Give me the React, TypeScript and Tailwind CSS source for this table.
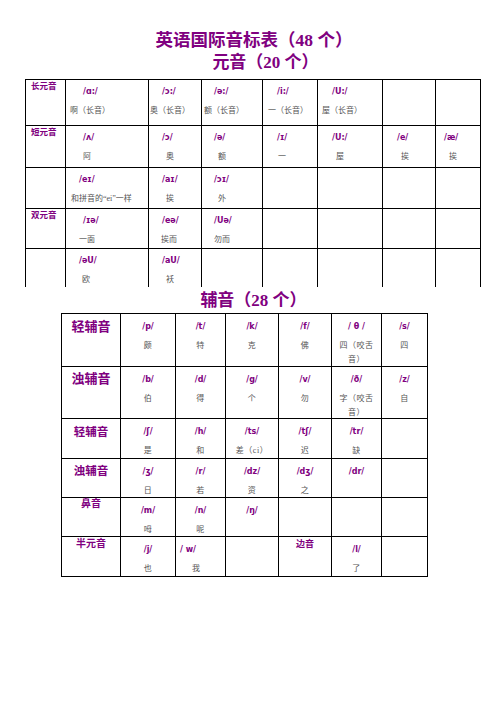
type Cell = {
  ipa?: string;
  zh?: React.ReactNode;
  ipaCls?: string;
  zhCls?: string;
  label?: string;
};

const purple = "text-[#800080]";
const cjk = "[font-family:'Liberation_Serif','Noto_Sans_CJK_SC',serif]";

// 元音 rows: first cell is the row label, then 7 sound cells
const vowelRows: { label?: string; cells: Cell[] }[] = [
  {
    label: "长元音",
    cells: [
      { ipa: "/ɑ:/", zh: "啊（长音）", ipaCls: "pl-[17px]", zhCls: "pl-[4px]" },
      { ipa: "/ɔ:/", zh: "奥（长音）", ipaCls: "pl-[13px]", zhCls: "pl-[1px]" },
      { ipa: "/ə:/", zh: "额（长音）", ipaCls: "pl-[12px]", zhCls: "pl-[2px]" },
      { ipa: "/i:/", zh: "一（长音）", ipaCls: "pl-[14px]", zhCls: "pl-[5px]" },
      { ipa: "/U:/", zh: "屋（长音）", ipaCls: "pl-[14px]", zhCls: "pl-[4px]" },
      {},
      {},
    ],
  },
  {
    label: "短元音",
    cells: [
      { ipa: "/ʌ/", zh: "阿", ipaCls: "pl-[17px]", zhCls: "pl-[17px]" },
      { ipa: "/ɔ/", zh: "奥", ipaCls: "pl-[13px]", zhCls: "pl-[17px]" },
      { ipa: "/ə/", zh: "额", ipaCls: "pl-[12px]", zhCls: "pl-[16px]" },
      { ipa: "/ɪ/", zh: "一", ipaCls: "pl-[14px]", zhCls: "pl-[15px]" },
      { ipa: "/U:/", zh: "屋", ipaCls: "pl-[14px]", zhCls: "pl-[18px]" },
      { ipa: "/e/", zh: "挨", ipaCls: "pl-[14px]", zhCls: "pl-[18px]" },
      { ipa: "/æ/", zh: "挨", ipaCls: "pl-[8px]", zhCls: "pl-[13px]" },
    ],
  },
  {
    cells: [
      { ipa: "/eɪ/", zh: "和拼音的“ei”一样", ipaCls: "pl-[13px]", zhCls: "pl-[5px]" },
      { ipa: "/aɪ/", zh: "挨", ipaCls: "pl-[13px]", zhCls: "pl-[17px]" },
      { ipa: "/ɔɪ/", zh: "外", ipaCls: "pl-[12px]", zhCls: "pl-[16px]" },
      {},
      {},
      {},
      {},
    ],
  },
  {
    label: "双元音",
    cells: [
      { ipa: "/ɪə/", zh: "一面", ipaCls: "pl-[17px]", zhCls: "pl-[13px]" },
      { ipa: "/eə/", zh: "挨而", ipaCls: "pl-[13px]", zhCls: "pl-[12px]" },
      { ipa: "/Uə/", zh: "勿而", ipaCls: "pl-[12px]", zhCls: "pl-[12px]" },
      {},
      {},
      {},
      {},
    ],
  },
  {
    cells: [
      { ipa: "/əU/", zh: "欧", ipaCls: "pl-[13px]", zhCls: "pl-[16px]" },
      { ipa: "/aU/", zh: "袄", ipaCls: "pl-[13px]", zhCls: "pl-[17px]" },
      {},
      {},
      {},
      {},
      {},
    ],
  },
];

const consonantRows: { label: string; labelCls: string; cells: Cell[] }[] = [
  {
    label: "轻辅音",
    labelCls: "text-[13px] leading-[16px] pt-[5px]",
    cells: [
      { ipa: "/p/", zh: "颇" },
      { ipa: "/t/", zh: "特" },
      { ipa: "/k/", zh: "克" },
      { ipa: "/f/", zh: "佛" },
      { ipa: "/ θ /", zh: (<>四（咬舌<br />音）</>) },
      { ipa: "/s/", zh: "四" },
    ],
  },
  {
    label: "浊辅音",
    labelCls: "text-[13px] leading-[16px] pt-[4px]",
    cells: [
      { ipa: "/b/", zh: "伯" },
      { ipa: "/d/", zh: "得" },
      { ipa: "/g/", zh: "个" },
      { ipa: "/v/", zh: "勿" },
      { ipa: "/ð/", zh: (<>字（咬舌<br />音）</>) },
      { ipa: "/z/", zh: "自" },
    ],
  },
  {
    label: "轻辅音",
    labelCls: "text-[11.5px] leading-[14px] pt-[6px]",
    cells: [
      { ipa: "/ʃ/", zh: "是" },
      { ipa: "/h/", zh: "和" },
      { ipa: "/ts/", zh: "差（ci）" },
      { ipa: "/tʃ/", zh: "迟" },
      { ipa: "/tr/", zh: "缺" },
      {},
    ],
  },
  {
    label: "浊辅音",
    labelCls: "text-[11.5px] leading-[14px] pt-[5px]",
    cells: [
      { ipa: "/ʒ/", zh: "日" },
      { ipa: "/r/", zh: "若" },
      { ipa: "/dz/", zh: "资" },
      { ipa: "/dʒ/", zh: "之" },
      { ipa: "/dr/" },
      {},
    ],
  },
  {
    label: "鼻音",
    labelCls: "text-[10px] leading-[12px] pt-0",
    cells: [
      { ipa: "/m/", zh: "呣" },
      { ipa: "/n/", zh: "呢" },
      { ipa: "/ŋ/" },
      {},
      {},
      {},
    ],
  },
  {
    label: "半元音",
    labelCls: "text-[10px] leading-[12px] pt-[1px]",
    cells: [
      { ipa: "/j/", zh: "也" },
      { ipa: "/ w/", zh: "我", ipaCls: "text-left pl-[4px]", zhCls: "text-left pl-[16px]" },
      {},
      { label: "边音" },
      { ipa: "/l/", zh: "了" },
      {},
    ],
  },
];

function VowelCell({ cell }: { cell: Cell }) {
  return (
    <div className="border-t border-l border-black pt-[6px]">
      {cell.ipa && (
        <div className={`${cell.ipaCls} h-[11px] text-[8px] leading-[11px] font-bold ${purple} [font-family:'DejaVu_Sans',sans-serif] whitespace-nowrap`}>
          {cell.ipa}
        </div>
      )}
      {cell.zh && (
        <div className={`${cell.zhCls} mt-[8px] text-[8px] leading-[11px] text-[#555] ${cjk} whitespace-nowrap`}>
          {cell.zh}
        </div>
      )}
    </div>
  );
}

function ConsonantCell({ cell }: { cell: Cell }) {
  if (cell.label) {
    return (
      <div className={`border-t border-l border-black pt-[1px] text-center text-[9px] leading-[12px] font-bold ${purple} ${cjk}`}>
        {cell.label}
      </div>
    );
  }
  return (
    <div className="border-t border-l border-black pt-[7px] text-center">
      {cell.ipa && (
        <div className={`${cell.ipaCls ?? ""} h-[11px] text-[8px] leading-[11px] font-bold ${purple} [font-family:'DejaVu_Sans',sans-serif] whitespace-pre`}>
          {cell.ipa}
        </div>
      )}
      {cell.zh && (
        <div className={`${cell.zhCls ?? ""} mt-[8px] text-[8px] leading-[14px] -translate-y-[1px] tracking-[0.5px] text-[#555] ${cjk} whitespace-nowrap`}>
          {cell.zh}
        </div>
      )}
    </div>
  );
}

export default function App() {
  return (
    <div className={`w-[496px] h-[702px] bg-white ${cjk}`}>
      <div className="pt-[30px] flex flex-col items-center">
        <h1 className={`ml-[12px] h-[20px] text-[17.5px] leading-[20px] font-bold ${purple} whitespace-nowrap`}>
          英语国际音标表（48 个）
        </h1>
        <h2 className={`ml-[35px] mt-[3px] h-[20px] text-[17px] leading-[20px] font-bold ${purple} whitespace-nowrap`}>
          元音（20 个）
        </h2>
      </div>

      {/* 元音表 */}
      <div className="ml-[25px] mt-[6px] w-[456px] border-r border-black grid grid-cols-[40px_83px_53px_61px_55px_65px_53px_45px] grid-rows-[46px_42px_41px_40px_39px]">
        {vowelRows.map((row, i) => (
          <div key={i} className="contents">
            <div className={`border-t border-l border-black pl-[5px] pt-[1px] text-[8.5px] leading-[11px] font-bold ${purple}`}>
              {row.label}
            </div>
            {row.cells.map((c, j) => (
              <VowelCell key={j} cell={c} />
            ))}
          </div>
        ))}
      </div>

      <div className="flex justify-center">
        <h2 className={`ml-[11px] mt-[4px] h-[20px] text-[17px] leading-[20px] font-bold ${purple} whitespace-nowrap`}>
          辅音（28 个）
        </h2>
      </div>

      {/* 辅音表 */}
      <div className="ml-[61px] mt-[2px] w-[367px] border-r border-b border-black grid grid-cols-[59px_55px_50px_53px_53px_50px_46px] grid-rows-[53px_52px_40px_39px_39px_40px]">
        {consonantRows.map((row, i) => (
          <div key={i} className="contents">
            <div className={`border-t border-l border-black text-center font-bold ${purple} ${row.labelCls}`}>
              {row.label}
            </div>
            {row.cells.map((c, j) => (
              <ConsonantCell key={j} cell={c} />
            ))}
          </div>
        ))}
      </div>
    </div>
  );
}
